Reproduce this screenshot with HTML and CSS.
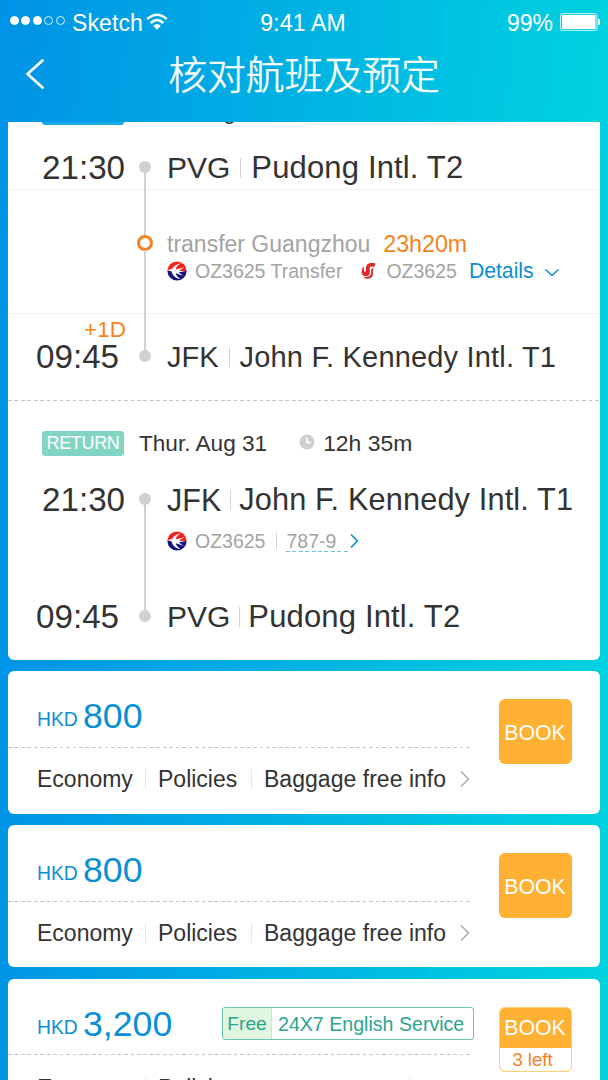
FILE: index.html
```html
<!DOCTYPE html>
<html lang="zh-CN">
<head>
<meta charset="utf-8">
<title>核对航班及预定</title>
<link rel="stylesheet" href="styles.css">
</head>
<body>
<svg width="0" height="0" class="defs" aria-hidden="true">
  <symbol id="eastern" viewBox="0 0 20 20">
    <path d="M.4 10a9.600 9.600 0 0 1 19.200 0z" fill="#f5211d"/>
    <path d="M.4 10a9.600 9.600 0 0 0 19.200 0z" fill="#14147c"/>
    <path d="M14.500 2.200C9.500 3 6.500 5 5.600 7.600L.8 9.200L4.600 10.400C5.500 14.500 8.500 17.300 13.500 18C10.500 16 9 14 8.800 12.200L16.500 14.800L11.500 11.300L18.500 10.600L12 9.700L17.300 6.300L8.600 8.400C9 5.600 11.500 3.500 14.500 2.200Z" fill="#fff"/>
  </symbol>
  <symbol id="phoenix" viewBox="0 0 16 18">
    <path d="M15.500 1.500C9 0 5.800 2.200 6 6.500C6.100 8.500 6 9.500 5 9.800C4 10 3.700 8 3.900 4.200C1.500 6.500 1 10.500 2.300 12.600C4 15 8.600 14.500 9.700 11.500C10.500 9 8.500 5.500 11 4.600C12 4.200 13 4.800 13.800 5.200C14.600 4 15 3 15.500 1.500Z" fill="#e5262b"/>
    <path d="M13.700 6.600C10.300 5.800 11.200 8.500 11.200 10.500C11.200 14 8 15.300 3.300 15C5.500 17.600 11 17.300 12.600 14C13.700 11.700 12.300 9.500 13 8.400Z" fill="#e5262b"/>
  </symbol>
</svg>

<header class="header">
  <div class="status">
    <div class="status-left">
      <i class="signal on"></i><i class="signal on"></i><i class="signal on"></i><i class="signal"></i><i class="signal"></i>
      <span class="carrier">Sketch</span>
      <svg class="wifi" width="22" height="18" viewBox="0 0 22 18" fill="none" stroke="#fff" stroke-width="2.500"><path d="M1.200 6.200Q11-2.800 20.800 6.200M4.700 10Q11 4 17.300 10"/><path d="M7.200 12.800Q11 9 14.800 12.800L11 16.800Z" fill="#fff" stroke="none"/></svg>
    </div>
    <span class="clock">9:41 AM</span>
    <div class="status-right">
      <span>99%</span>
      <svg width="40" height="18" viewBox="0 0 40 18"><rect x=".6" y=".6" width="36.300" height="16.800" rx="1.500" fill="none" stroke="#c8f7fb"/><rect x="2" y="2" width="33.500" height="14" fill="#fff"/><path d="M38 6h1.500q.5 0 .5 1v4q0 1-.5 1H38z" fill="#fff"/></svg>
    </div>
  </div>
  <nav class="nav">
    <svg class="back" width="20" height="32" viewBox="0 0 20 32" fill="none" stroke="#fff" stroke-width="2.800" stroke-linecap="round" stroke-linejoin="round"><path d="M17.500 2.500 2.500 16 17.500 29.500"/></svg>
    <h1 class="title">核对航班及预定</h1>
  </nav>
</header>

<main class="list">
  <section class="card trip">
    <div class="leg-head">
      <span class="badge depart">DEPART</span><span class="date">Thur. Aug 30</span>
    </div>
    <div class="leg out">
      <div class="rule r1"></div><div class="rule r2"></div>
      <div class="rail"><i class="dot"></i><i class="line"></i><i class="ring"></i><i class="line long"></i><i class="dot"></i></div>
      <div class="time start">21:30</div>
      <div class="place p1"><span class="pvg">PVG</span><i class="sep"></i><span class="name pudong-a">Pudong Intl. T2</span></div>
      <div class="transfer">
        <div class="via"><span>transfer Guangzhou</span><span class="wait">23h20m</span></div>
        <div class="flight"><svg class="logo" width="20" height="20"><use href="#eastern"/></svg><span class="no">OZ3625 Transfer</span><svg class="logo2" width="16" height="18"><use href="#phoenix"/></svg><span class="no second">OZ3625</span><a class="details">Details</a><svg class="down" width="16" height="10" viewBox="0 0 16 10" fill="none" stroke="#0b8fd3" stroke-width="1.500"><path d="M1.500 1.500 8 7.500 14.500 1.500"/></svg></div>
      </div>
      <div class="time end"><span class="plus">+1D</span><span class="arrive">09:45</span></div>
      <div class="place p3 compact"><span>JFK</span><i class="sep"></i><span class="name kennedy-a">John F. Kennedy Intl. T1</span></div>
    </div>
    <div class="dash"></div>
    <div class="leg-head back-head">
      <span class="badge return">RETURN</span><span class="date">Thur. Aug 31</span>
      <svg class="clock-icon" width="16" height="16" viewBox="0 0 16 16"><circle cx="8" cy="8" r="7.500" fill="#cfcfcf"/><path d="M7.800 3.500V8.500H12" fill="none" stroke="#fff" stroke-width="1.700"/></svg>
      <span class="duration">12h 35m</span>
    </div>
    <div class="leg home">
      <div class="rail"><i class="dot"></i><i class="line"></i><i class="dot"></i></div>
      <div class="time start">21:30</div>
      <div class="place p1"><span>JFK</span><i class="sep"></i><span class="name kennedy-b">John F. Kennedy Intl. T1</span></div>
      <div class="flight"><svg class="logo" width="20" height="20"><use href="#eastern"/></svg><span class="no single">OZ3625</span><i class="sep small"></i><a class="plane">787-9</a><svg class="next" width="9" height="16" viewBox="0 0 9 16" fill="none" stroke="#0b8fd3" stroke-width="1.700"><path d="M1 1.500 7.300 8 1 14.500"/></svg></div>
      <div class="time end">09:45</div>
      <div class="place p3"><span class="pvg">PVG</span><i class="sep"></i><span class="name pudong-b">Pudong Intl. T2</span></div>
    </div>
  </section>

  <section class="card offer">
    <div class="info">
      <div class="price"><span class="cur">HKD</span><span class="amount">800</span></div>
      <div class="dash"></div>
      <div class="links"><span class="eco">Economy</span><span class="pol">Policies</span><span class="bag">Baggage free info</span><svg width="10" height="18" viewBox="0 0 10 18" fill="none" stroke="#aaa" stroke-width="1.500"><path d="M1 1.500 8.500 9 1 16.500"/></svg></div>
    </div>
    <button class="book"><span>BOOK</span></button>
  </section>

  <section class="card offer">
    <div class="info">
      <div class="price"><span class="cur">HKD</span><span class="amount">800</span></div>
      <div class="dash"></div>
      <div class="links"><span class="eco">Economy</span><span class="pol">Policies</span><span class="bag">Baggage free info</span><svg width="10" height="18" viewBox="0 0 10 18" fill="none" stroke="#aaa" stroke-width="1.500"><path d="M1 1.500 8.500 9 1 16.500"/></svg></div>
    </div>
    <button class="book"><span>BOOK</span></button>
  </section>

  <section class="card offer">
    <div class="info">
      <div class="price"><span class="cur">HKD</span><span class="amount">3,200</span><span class="service"><b>Free</b><span>24X7 English Service</span></span></div>
      <div class="dash"></div>
      <div class="links last"><span class="eco">Economy</span><span class="pol wide">Policies</span></div>
    </div>
    <button class="book limited"><span>BOOK</span><small>3 left</small></button>
  </section>
</main>
</body>
</html>
```
FILE: styles.css
```css
* { box-sizing: border-box; }
body {
  margin: 0;
  width: 608px;
  height: 1080px;
  overflow: hidden;
  display: flex;
  flex-direction: column;
  font-family: "Liberation Sans", "Noto Sans CJK SC", sans-serif;
  color: #333;
  background: linear-gradient(93deg, #0092e6 0%, #0094e6 5%, #00d2e0 97%);
  white-space: nowrap;
}
i { display: block; flex: none; }
svg { flex: none; display: block; }
.defs { position: absolute; }

.header { height: 122px; flex: none; color: #fff; background: linear-gradient(97deg, #0092e6 0%, #00d2e0 98%); }
.status { display: grid; grid-template-columns: 1fr auto 1fr; height: 46px; padding: 0 8px 0 10px; font-size: 23px; line-height: 46px; }
.clock { margin-right: 4px; letter-spacing: .15px; }
.status-left, .status-right { display: flex; align-items: center; }
.status-right { justify-content: flex-end; gap: 7px; }
.status-right svg { margin-bottom: 3px; }
.signal { width: 9px; height: 9px; margin: 0 2.400px 5px 0; border: 1px solid #d8f1fc; border-radius: 50%; }
.signal.on { background: #fff; border-color: #fff; }
.carrier { margin-left: 5px; letter-spacing: .1px; }
.wifi { margin: 0 0 3px 3px; }
.nav { display: flex; align-items: center; height: 56px; }
.back { margin-left: 25px; }
.title { flex: 1; margin: -4px 45px 0 0; text-align: center; font: 300 38.800px/54px "Noto Sans CJK SC", sans-serif; -webkit-text-stroke: .5px #fff; }

.list { flex: 1; overflow: hidden; padding: 0 8px; }
.card { background: #fff; border-radius: 6px; margin-bottom: 11.400px; }
.trip { margin-top: -24px; height: 562px; }
.leg-head { display: flex; align-items: center; height: 28px; padding-left: 34px; font-size: 22.600px; }
.back-head { margin-top: 28px; }
.back-head .date { padding-top: 1px; }
.badge { width: 82px; height: 25px; border-radius: 3px; color: #fff; font-size: 18px; line-height: 25px; text-align: center; letter-spacing: -.35px; }
.depart { background: #1aaae8; }
.return { background: #82d5c0; border: 1px solid #7dd3cf; line-height: 23px; }
.date { margin-left: 15px; }
.clock-icon { margin: 0 0 2px 32px; }
.duration { margin-left: 8px; font-size: 22.900px; }

.leg { display: grid; grid-template-columns: 129px 16px 1fr; }
.out { grid-template-rows: 64px 124px 86px; }
.home { grid-template-rows: 65px 40px 98px; }
.rule { grid-column: 1 / -1; border-bottom: 1px solid #eaf3f8; }
.r1 { grid-row: 1; }
.r2 { grid-row: 2; }
.rail { grid-column: 2; grid-row: 1 / -1; display: flex; flex-direction: column; align-items: center; }
.out .rail { padding: 35px 0 38px; }
.home .rail { padding: 36px 0 38px; }
.dot { width: 12px; height: 12px; border-radius: 50%; background: #d0d0d0; }
.line { flex: 64 1 0; width: 2.500px; background: #d0d0d0; margin: -1px 0; }
.line.long { flex-grow: 100; }
.ring { width: 16px; height: 16px; border: 3px solid #f58220; border-radius: 50%; }
.time { grid-column: 1; font-size: 33.200px; line-height: 40px; }
.start { grid-row: 1; padding: 22px 0 0 34px; }
.home .start { padding-top: 23px; }
.end { grid-row: 3; padding-left: 28px; display: flex; flex-direction: column; }
.out .end { padding-top: 4px; }
.home .end { padding-top: 35px; }
.plus { font-size: 22.500px; line-height: 24px; margin-left: 48px; color: #f58220; }
.arrive { line-height: 32px; margin-top: -1px; }
.place { grid-column: 3; display: flex; height: 40px; line-height: 40px; font-size: 30.500px; padding-left: 14px; }
.pvg { font-size: 30px; }
.p1 { grid-row: 1; margin-top: 22px; }
.home .p1 { margin-top: 23px; }
.p3 { grid-row: 3; }
.out .p3 { margin-top: 23px; }
.home .p3 { margin-top: 35px; }
.compact { font-size: 29px; }
.sep { width: 1px; height: 20px; background: #d5d5d5; margin: 10px 10px 0 10px; }
.home .place .sep { margin: 10px 8px 0 9px; }
.name { font-size: 31px; }
.pudong-a { letter-spacing: .15px; }
.pudong-b { letter-spacing: .15px; }
.kennedy-a { font-size: 29px; letter-spacing: .18px; }
.kennedy-b { font-size: 30.700px; letter-spacing: .15px; }
.transfer { grid-column: 3; grid-row: 2; padding: 40px 0 0 14px; }
.via { display: flex; font-size: 23px; line-height: 28px; color: #a3a3a3; }
.wait { margin-left: 13px; color: #f58220; font-size: 23.200px; }
.flight { display: flex; align-items: center; height: 26px; font-size: 19.500px; color: #a3a3a3; }
.home .flight { grid-column: 3; grid-row: 2; padding-left: 14px; margin-top: 6px; }
.no { margin-left: 8px; }
.logo2 { margin-left: 18px; }
.second { margin-left: 10px; }
.details { margin-left: 12px; color: #0b8fd3; font-size: 21.200px; }
.down { margin: 3px 0 0 10px; }
.home .flight .small { height: 16px; margin: 0 9px 0 11px; }
.plane { width: 62px; height: 22px; line-height: 22px; background: repeating-linear-gradient(90deg, #6cc0ee 0 4px, transparent 4px 6.400px) bottom / 100% 1.500px no-repeat; }
.next { margin-left: 2px; }
.dash { height: 1px; background: repeating-linear-gradient(90deg, #c6c6c6 0 3.700px, transparent 3.700px 6.450px); }

.offer { height: 142.300px; display: flex; align-items: flex-start; }
.info { width: 464px; }
.price { display: flex; height: 75.700px; padding: 25px 0 0 29px; color: #0b8fd3; }
.cur { font-size: 19.300px; line-height: 48px; width: 46px; }
.amount { font-size: 35.700px; line-height: 40px; }
.links { display: flex; align-items: center; height: 62px; padding-left: 29px; font-size: 23px; }
.links span { line-height: 20px; }
.last { padding-top: 4px; }
.eco { width: 109px; border-right: 1px solid #e3e9ea; }
.pol { width: 106px; padding-left: 12px; border-right: 1px solid #e3e9ea; }
.wide { width: 264px; }
.bag { width: 195px; padding-left: 12px; letter-spacing: .03px; }
.links svg { margin-left: 13px; }
.book { width: 73px; height: 65px; margin: 28px 0 0 26.500px; padding: 2px 0 0; border: 0; border-radius: 6px; overflow: hidden; background: #ffb133; color: #fff; font: 21.300px/40px "Liberation Sans", sans-serif; }
.limited { display: flex; flex-direction: column; padding: 0; border: 1px solid #ffcf72; }
.limited span { height: 40px; width: 100%; }
.limited small { height: 24px; width: 100%; background: #fff; color: #f58220; font-size: 18.500px; line-height: 23px; padding-right: 5px; }
.service { display: flex; width: 252px; height: 33px; margin: 3px -2px 0 auto; border: 1px solid #6cc7b2; border-radius: 3px; font-size: 19.600px; line-height: 32px; color: #2ba58c; overflow: hidden; }
.service b { width: 49px; font-weight: 400; text-align: center; background: #e0f6e0; border-right: 1px solid #c5e6d8; font-size: 19.200px; }
.service > span { margin-left: 6px; }
```
